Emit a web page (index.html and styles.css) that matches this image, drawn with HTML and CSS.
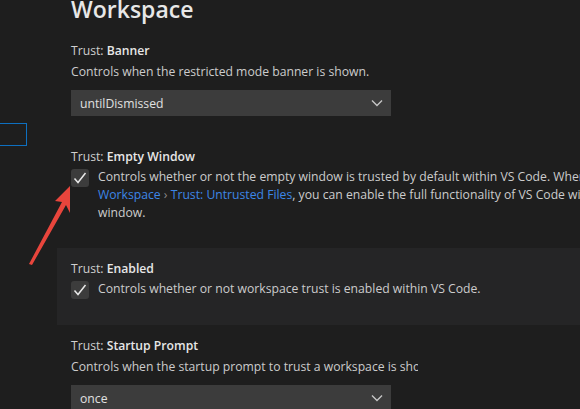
FILE: index.html
```html
<!DOCTYPE html>
<html lang="en">

<head>
  <meta charset="UTF-8" />
  <meta name="viewport" content="width=device-width, initial-scale=1.0" />
  <title>Settings - Workspace Trust</title>
  <link rel="stylesheet" href="styles.css">
</head>

<body>
  <div class="editor">
    <!-- Table of contents, mostly scrolled out of view -->
    <div class="toc">
      <div class="toc-item focused"></div>
    </div>

    <div class="settings">
      <h2 class="group-title">Workspace</h2>

      <!-- Trust: Banner -->
      <div class="setting enum">
        <div class="setting-label"><span class="category">Trust: </span>Banner</div>
        <div class="setting-desc">Controls when the restricted mode banner is shown.</div>
        <div class="select">
          <span>untilDismissed</span>
          <svg class="chevron" width="12" height="8" viewBox="0 0 12 8">
            <path d="M1 1.5 L6 6.5 L11 1.5" fill="none" stroke="#c5c5c5" stroke-width="1.4" />
          </svg>
        </div>
      </div>

      <!-- Trust: Empty Window -->
      <div class="setting bool">
        <div class="setting-label"><span class="category">Trust: </span>Empty Window</div>
        <div class="check-row">
          <span class="checkbox">
            <svg width="18" height="18" viewBox="0 0 18 18">
              <path d="M3.5 9.5 L7 13.5 L14.5 4" fill="none" stroke="#e8e8e8" stroke-width="1.5" />
            </svg>
          </span>
          <div class="setting-desc">
            Controls whether or not the empty window is trusted by default within VS Code. When used with Security ›<br>
            <a class="link" href="#">Workspace</a> <span class="sep">›</span> <a class="link" href="#">Trust: Untrusted Files</a>, you can enable the full functionality of VS Code without prompting in an empty<br>
            window.
          </div>
        </div>
      </div>

      <!-- Trust: Enabled (hovered) -->
      <div class="setting bool hovered">
        <div class="setting-label"><span class="category">Trust: </span>Enabled</div>
        <div class="check-row">
          <span class="checkbox">
            <svg width="18" height="18" viewBox="0 0 18 18">
              <path d="M3.5 9.5 L7 13.5 L14.5 4" fill="none" stroke="#e8e8e8" stroke-width="1.5" />
            </svg>
          </span>
          <div class="setting-desc">Controls whether or not workspace trust is enabled within VS Code.</div>
        </div>
      </div>

      <!-- Trust: Startup Prompt -->
      <div class="setting enum">
        <div class="setting-label"><span class="category">Trust: </span>Startup Prompt</div>
        <div class="setting-desc clipped">Controls when the startup prompt to trust a workspace is shown.</div>
        <div class="select">
          <span>once</span>
          <svg class="chevron" width="12" height="8" viewBox="0 0 12 8">
            <path d="M1 1.5 L6 6.5 L11 1.5" fill="none" stroke="#c5c5c5" stroke-width="1.4" />
          </svg>
        </div>
      </div>
    </div>
  </div>

  <!-- annotation arrow -->
  <svg class="pointer" width="80" height="100" viewBox="0 0 80 100">
    <polygon points="70,5 55,20 62,21 29,83 32,84 66,24 70,32" fill="#e8453c" />
  </svg>
</body>

</html>
```

FILE: styles.css
```css
* {
  margin: 0;
  padding: 0;
  box-sizing: border-box;
}

body {
  width: 580px;
  height: 409px;
  overflow: hidden;
  background: #1e1e1e;
  color: #cccccc;
  font-family: 'Open Sans', 'Noto Sans', sans-serif;
  font-size: 12.2px;
  position: relative;
}

.editor {
  display: flex;
}

.toc {
  width: 57px;
  flex-shrink: 0;
  padding-top: 123px;
}

.toc-item.focused {
  width: 27px;
  height: 23px;
  border: 1px solid #0e70c0;
  border-left: none;
}

.settings {
  flex: 1;
  min-width: 0;
  overflow: hidden;
}

.group-title {
  font-size: 23px;
  font-weight: 600;
  color: #e7e7e7;
  line-height: 30px;
  margin-top: -6px;
  padding-left: 14px;
  height: 36px;
}

.setting {
  padding: 12px 0 22px 14px;
}

.setting.enum {
  padding-bottom: 20px;
}

.setting.bool {
  padding-bottom: 26px;
}

.setting.hovered {
  background: #252526;
}

.setting-label {
  line-height: 18px;
  font-weight: 600;
  color: #e7e7e7;
}

.setting-label .category {
  font-weight: 400;
  color: #cfcfcf;
}

.setting-desc {
  line-height: 18px;
  margin-top: 3px;
  white-space: nowrap;
}

.setting-desc.clipped {
  width: 347px;
  overflow: hidden;
}

.select {
  width: 320px;
  height: 26px;
  margin-top: 9px;
  background: #3c3c3c;
  color: #e0e0e0;
  display: flex;
  align-items: center;
  justify-content: space-between;
  padding: 0 8px 0 9px;
}

.check-row {
  display: flex;
  gap: 9px;
  margin-top: 3px;
}

.check-row .setting-desc {
  margin-top: -1px;
}

.checkbox {
  width: 18px;
  height: 18px;
  flex-shrink: 0;
  background: #3c3c3c;
  border-radius: 3px;
}

.checkbox svg {
  display: block;
}

.link {
  color: #3d86e6;
  text-decoration: none;
}

.sep {
  color: #8a8a8a;
}

.pointer {
  position: absolute;
  left: 0;
  top: 181px;
}
```
